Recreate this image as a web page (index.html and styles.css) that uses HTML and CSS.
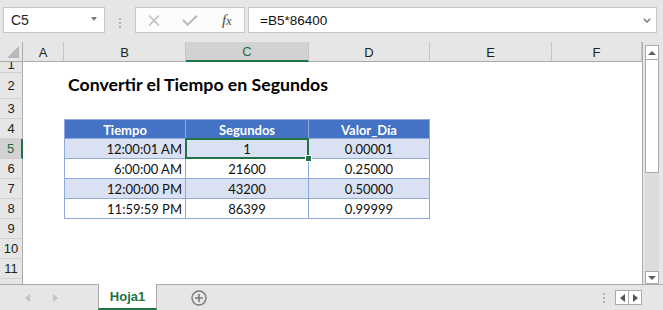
FILE: index.html
```html
<!DOCTYPE html>
<html lang="es">
<head>
  <meta charset="UTF-8">
  <meta name="viewport" content="width=device-width, initial-scale=1.0">
  <title>Convertir el Tiempo en Segundos</title>
  <link rel="stylesheet" href="styles.css">
</head>
<body>
  <!-- formula bar -->
  <div class="formula-bar">
    <div class="name-box">
      <span>C5</span>
      <span class="drop"></span>
    </div>
    <div class="grip"><i></i><i></i><i></i></div>
    <div class="fx-box">
      <svg class="ic-x" width="12" height="11" viewBox="0 0 12 11"><path d="M1 0.5L11 10.5M11 0.5L1 10.5" stroke="#b9b9b9" stroke-width="1.3" fill="none"/></svg>
      <svg class="ic-ok" width="16" height="11" viewBox="0 0 16 11"><path d="M1 5L5.5 9.8L15 0.8" stroke="#b9b9b9" stroke-width="1.9" fill="none"/></svg>
      <span class="fx">f<span>x</span></span>
    </div>
    <div class="formula">
      <span>=B5*86400</span>
      <svg width="8" height="5" viewBox="0 0 8 5"><path d="M0.8 0.8L4 4L7.2 0.8" stroke="#7a7a7a" stroke-width="1.5" fill="none"/></svg>
    </div>
  </div>

  <div class="sheet">
    <div class="grid">
      <!-- column headers -->
      <div class="corner"><span></span></div>
      <div class="ch">A</div>
      <div class="ch">B</div>
      <div class="ch active">C</div>
      <div class="ch">D</div>
      <div class="ch">E</div>
      <div class="ch">F</div>

      <div class="rh row1"><span>1</span></div>
      <div></div><div></div><div></div><div></div><div></div><div></div>

      <div class="rh">2</div>
      <div></div>
      <div class="cell title">Convertir el Tiempo en Segundos</div>
      <div></div><div></div><div></div><div></div>

      <div class="rh">3</div>
      <div></div><div></div><div></div><div></div><div></div><div></div>

      <div class="rh">4</div>
      <div></div>
      <div class="cell t th first">Tiempo</div>
      <div class="cell t th">Segundos</div>
      <div class="cell t th">Valor_Día</div>
      <div></div><div></div>

      <div class="rh active">5</div>
      <div></div>
      <div class="cell t band first num">12:00:01 AM</div>
      <div class="cell t band sel">1<span class="handle"></span></div>
      <div class="cell t band">0.00001</div>
      <div></div><div></div>

      <div class="rh">6</div>
      <div></div>
      <div class="cell t first num">6:00:00 AM</div>
      <div class="cell t">21600</div>
      <div class="cell t">0.25000</div>
      <div></div><div></div>

      <div class="rh">7</div>
      <div></div>
      <div class="cell t band first num">12:00:00 PM</div>
      <div class="cell t band">43200</div>
      <div class="cell t band">0.50000</div>
      <div></div><div></div>

      <div class="rh">8</div>
      <div></div>
      <div class="cell t first num">11:59:59 PM</div>
      <div class="cell t">86399</div>
      <div class="cell t">0.99999</div>
      <div></div><div></div>

      <div class="rh">9</div>
      <div></div><div></div><div></div><div></div><div></div><div></div>
      <div class="rh">10</div>
      <div></div><div></div><div></div><div></div><div></div><div></div>
      <div class="rh">11</div>
      <div></div><div></div><div></div><div></div><div></div><div></div>
      <div class="rh last"></div>
      <div></div><div></div><div></div><div></div><div></div><div></div>
    </div>

    <div class="vscroll">
      <div class="sbtn up"><span></span></div>
      <div class="thumb"></div>
      <div class="track"></div>
      <div class="sbtn down"><span></span></div>
    </div>
  </div>

  <!-- sheet tabs -->
  <div class="tabs">
    <div class="tab-nav">
      <span class="tri left"></span>
      <span class="tri right"></span>
    </div>
    <div class="tab">Hoja1</div>
    <svg class="add" width="16" height="16" viewBox="0 0 16 16">
      <circle cx="8" cy="8" r="7" stroke="#7b7b7b" stroke-width="1.4" fill="none"/>
      <path d="M8 4V12M4 8H12" stroke="#7b7b7b" stroke-width="1.6"/>
    </svg>
    <div class="spacer"></div>
    <div class="grip small"><i></i><i></i><i></i></div>
    <div class="hnav">
      <span><b class="tri left dark"></b></span>
      <span><b class="tri right dark"></b></span>
    </div>
  </div>
</body>
</html>
```

FILE: styles.css
```css
body {
  margin: 0;
  width: 663px;
  height: 310px;
  overflow: hidden;
  background-color: #e6e6e6;
  font-family: "Liberation Sans", Arial, sans-serif;
  color: #222;
}

/* formula bar */
.formula-bar {
  display: flex;
  height: 42px;
  box-sizing: border-box;
  padding-top: 7px;
}
.name-box {
  margin-left: 3px;
  width: 102px;
  height: 26px;
  box-sizing: border-box;
  border: 1px solid #c6c6c6;
  background-color: #fff;
  display: flex;
  align-items: center;
  justify-content: space-between;
  padding: 0 7px 0 7px;
  font-size: 14px;
}
.drop {
  width: 0;
  height: 0;
  border-left: 3.5px solid transparent;
  border-right: 3.5px solid transparent;
  border-top: 4px solid #7a7a7a;
  margin-top: -3px;
}
.grip {
  width: 30px;
  display: flex;
  flex-direction: column;
  align-items: center;
  justify-content: center;
  gap: 2px;
  padding-bottom: 3px;
}
.grip i {
  display: block;
  width: 2px;
  height: 2px;
  background-color: #b3b3b3;
}
.fx-box {
  width: 110px;
  height: 26px;
  box-sizing: border-box;
  border: 1px solid #c6c6c6;
  background-color: #fcfcfc;
  display: flex;
  align-items: center;
  padding-left: 12px;
}
.ic-ok {
  margin-left: 22px;
}
.fx {
  margin-left: 24px;
  font-family: "Liberation Serif", serif;
  font-style: italic;
  font-size: 15px;
  color: #4a4a4a;
}
.fx span {
  font-size: 12px;
}
.formula {
  margin-left: 3px;
  width: 409px;
  height: 26px;
  box-sizing: border-box;
  border: 1px solid #c6c6c6;
  background-color: #fff;
  display: flex;
  align-items: center;
  justify-content: space-between;
  padding: 0 5px 0 11px;
  font-size: 13.5px;
  color: #111;
}

/* sheet */
.sheet {
  display: flex;
  height: 242px;
}
.grid {
  width: 643px;
  box-sizing: border-box;
  border-right: 1px solid #ababab;
  background-color: #fff;
  display: grid;
  grid-template-columns: 23px 41px 122px 123px 121px 122px 90px;
  grid-template-rows: 20px 11px 26px repeat(9, 20px) 5px;
  overflow: hidden;
}
.corner {
  background-color: #e6e6e6;
  border-right: 1px solid #ababab;
  border-bottom: 1px solid #ababab;
  box-sizing: border-box;
  display: flex;
  align-items: flex-end;
  justify-content: flex-end;
  padding: 0 3px 3px 0;
}
.corner span {
  width: 0;
  height: 0;
  border-left: 12px solid transparent;
  border-bottom: 12px solid #b8b8b8;
}
.ch {
  background-color: #e6e6e6;
  border-right: 1px solid #c4c4c4;
  border-bottom: 1px solid #ababab;
  box-sizing: border-box;
  display: flex;
  align-items: center;
  justify-content: center;
  font-size: 13px;
  color: #222;
  padding-top: 1px;
}
.ch:last-child {
  border-right: none;
}
.ch.active {
  background-color: #d2d2d2;
  color: #1e6b44;
  border-bottom: 2px solid #217346;
}
.rh {
  background-color: #e6e6e6;
  border-right: 1px solid #ababab;
  border-bottom: 1px solid #d0d0d0;
  box-sizing: border-box;
  display: flex;
  align-items: center;
  justify-content: center;
  font-size: 13px;
  color: #222;
  overflow: hidden;
}
.rh.row1 {
  align-items: flex-end;
}
.rh.row1 span {
  line-height: 10px;
  margin-bottom: 2px;
}
.rh.active {
  background-color: #d2d2d2;
  color: #1e6b44;
  border-right: 2px solid #217346;
}
.rh.last {
  border-bottom: none;
}

/* cells */
.cell {
  box-sizing: border-box;
  display: flex;
  align-items: center;
  justify-content: center;
  font-family: Lato, "Liberation Sans", sans-serif;
  font-size: 13px;
  color: #111;
  white-space: nowrap;
  padding-top: 1px;
}
.title {
  justify-content: flex-start;
  align-items: flex-end;
  padding: 0 0 4px 4px;
  font-size: 17.7px;
  font-weight: bold;
  color: #000;
  overflow: visible;
}
.t {
  border-right: 1px solid #8ea9db;
  border-bottom: 1px solid #8ea9db;
}
.t.first {
  border-left: 1px solid #8ea9db;
}
.th {
  border-top: 1px solid #8ea9db;
  background-color: #4472c4;
  color: #fff;
  font-weight: bold;
}
.band {
  background-color: #d9e1f2;
}
.num {
  justify-content: flex-end;
  padding-right: 3px;
}
.sel {
  position: relative;
}
.sel::after {
  content: "";
  position: absolute;
  left: -1px;
  top: -1px;
  right: -1px;
  bottom: -1px;
  border: 2px solid #217346;
}
.handle {
  position: absolute;
  right: -4px;
  bottom: -4px;
  width: 5px;
  height: 5px;
  background-color: #217346;
  border: 1px solid #fff;
  z-index: 1;
}

/* vertical scrollbar */
.vscroll {
  width: 20px;
  display: flex;
  flex-direction: column;
  padding: 3px 4px 0 2px;
  box-sizing: border-box;
}
.sbtn {
  height: 15px;
  box-sizing: border-box;
  border: 1px solid #ababab;
  background-color: #fff;
  display: flex;
  align-items: center;
  justify-content: center;
}
.sbtn.down {
  height: 13px;
}
.sbtn span {
  width: 0;
  height: 0;
  border-left: 4px solid transparent;
  border-right: 4px solid transparent;
}
.up span {
  border-bottom: 4px solid #606060;
}
.down span {
  border-top: 4px solid #606060;
}
.thumb {
  height: 113px;
  box-sizing: border-box;
  border: 1px solid #ababab;
  border-top: none;
  background-color: #fff;
}
.track {
  flex: 1;
  background-color: #dcdcdc;
}

/* tabs */
.tabs {
  display: flex;
  align-items: center;
  height: 26px;
  box-sizing: border-box;
  border-top: 1px solid #ababab;
}
.tab-nav {
  width: 98px;
  display: flex;
  align-items: center;
  padding-left: 25px;
  box-sizing: border-box;
  gap: 23px;
}
.tri {
  display: block;
  width: 0;
  height: 0;
  border-top: 4px solid transparent;
  border-bottom: 4px solid transparent;
}
.tri.left {
  border-right: 5px solid #c4c4c4;
}
.tri.right {
  border-left: 5px solid #c4c4c4;
}
.tri.left.dark {
  border-right-color: #555;
}
.tri.right.dark {
  border-left-color: #555;
}
.tab {
  align-self: flex-start;
  margin-top: -1px;
  width: 59px;
  height: 26px;
  box-sizing: border-box;
  background-color: #fff;
  border-left: 1px solid #ababab;
  border-right: 1px solid #ababab;
  border-bottom: 2px solid #217346;
  display: flex;
  align-items: center;
  justify-content: center;
  font-size: 13px;
  font-weight: bold;
  color: #217346;
}
.add {
  margin-left: 34px;
}
.spacer {
  flex: 1;
}
.grip.small {
  width: 10px;
  padding: 0;
}
.hnav {
  display: flex;
  margin: 0 21px 0 6px;
  border: 1px solid #ababab;
  background-color: #fff;
}
.hnav span {
  width: 12px;
  height: 13px;
  display: flex;
  align-items: center;
  justify-content: center;
}
.hnav span + span {
  border-left: 1px solid #ababab;
}
```
